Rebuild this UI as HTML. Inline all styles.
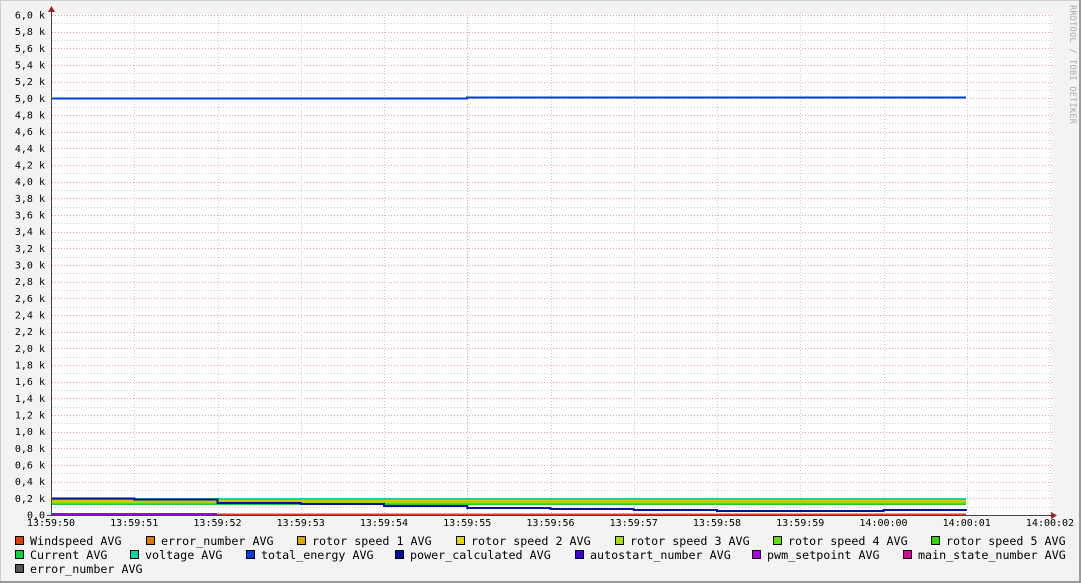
<!DOCTYPE html>
<html><head><meta charset="utf-8"><style>
html,body{margin:0;padding:0;background:#f3f3f3;}
svg{display:block;}
text{font-family:"DejaVu Sans Mono","Liberation Mono",monospace;}
</style></head><body>
<svg width="1081" height="583" xmlns="http://www.w3.org/2000/svg">
<rect x="0" y="0" width="1081" height="583" fill="#f3f3f3"/>
<rect x="0.5" y="0.5" width="1079" height="581" fill="none" stroke="#cfcfcf"/>
<line x1="1080" y1="0" x2="1080" y2="583" stroke="#9a9a9a" stroke-width="2"/>
<line x1="0" y1="582" x2="1081" y2="582" stroke="#9a9a9a" stroke-width="2"/>
<rect x="51" y="14" width="1001" height="501" fill="#ffffff"/>
<g id="grid"></g>
<g id="data"></g>
<g id="labels" font-size="10" fill="#000"></g>
<line x1="51.5" y1="9" x2="51.5" y2="516" stroke="#444"/>
<polygon points="48,12 51.5,6 55,12" fill="#a02020"/>
<line x1="47" y1="515.5" x2="1052" y2="515.5" stroke="#444"/>
<polygon points="1051,512 1057,515.5 1051,519" fill="#a02020"/>
<text x="1070" y="5" font-size="8.5" fill="#aaa" transform="rotate(90 1070 5)" letter-spacing="0.3">RRDTOOL / TOBI OETIKER</text>
<g id="legend" font-size="11.7" fill="#000"></g>
</svg>
<script>
var ns="http://www.w3.org/2000/svg";
function el(p,t,a,txt){var e=document.createElementNS(ns,t);for(var k in a)e.setAttribute(k,a[k]);if(txt!=null)e.textContent=txt;document.getElementById(p).appendChild(e);return e;}
// horizontal grid
for(var i=1;i<=60;i++){var y=515-i*500/60;y=Math.round(y)+0.5;
 var major=i%2==0;
 el("grid","line",{x1:52,x2:1052,y1:y,y2:y,stroke:major?"#e8a0a0":"#cccccc","stroke-dasharray":"1,2"});}
var xs=[];for(var j=0;j<=12;j++)xs.push(51+j*83.25);
for(var j=1;j<13;j++){var x=Math.round(xs[j])+0.5;el("grid","line",{x1:x,x2:x,y1:14,y2:515,stroke:j==5?"#e8a0a0":"#cccccc","stroke-dasharray":"1,2"});}
// y labels
for(var i=0;i<=30;i++){var v=(i*0.2).toFixed(1).replace(".",",");var y=515-i*500/30;
 el("labels","text",{x:45,y:y+3.5,"text-anchor":"end"},i==0?"0,0":v+" k");}
var tl=["13:59:50","13:59:51","13:59:52","13:59:53","13:59:54","13:59:55","13:59:56","13:59:57","13:59:58","13:59:59","14:00:00","14:00:01","14:00:02"];
for(var j=0;j<13;j++)el("labels","text",{x:xs[j],y:526,"text-anchor":"middle"},tl[j]);
// data
var X=function(j){return xs[j];};
function band(y,h,c,x0,x1){el("data","rect",{x:x0,y:y,width:x1-x0,height:h,fill:c});}
band(498,2,"#20d0a0",51,966);
band(500,1.5,"#e0c000",51,966);
band(501.5,2,"#90e000",51,966);
band(503.5,1.5,"#20cc30",51,966);
// total energy
el("data","path",{d:"M51 98.5H467V97.5H966",stroke:"#0040d0","stroke-width":2,fill:"none"});
// power calculated steps
var ys=[498.5,499.5,503,504,506,508,509,510,511,511,510];
var d="M51 "+ys[0];for(var k=0;k<11;k++){d+="V"+ys[k]+"H"+X(k+1);}
el("data","path",{d:d,stroke:"#0010a0","stroke-width":2,fill:"none"});
el("data","path",{d:"M51 514H217",stroke:"#a000e0","stroke-width":2,fill:"none"});
el("data","path",{d:"M217 514.5H966",stroke:"#e04010","stroke-width":2,fill:"none"});
// legend
var L=[[15,541,"#e03a00","Windspeed AVG"],[146,541,"#e07800","error_number AVG"],[297,541,"#e0a800","rotor speed 1 AVG"],[456,541,"#e0d800","rotor speed 2 AVG"],[615,541,"#a8e000","rotor speed 3 AVG"],[773,541,"#60e000","rotor speed 4 AVG"],[931,541,"#30d800","rotor speed 5 AVG"],
[15,555,"#00d840","Current AVG"],[130,555,"#00d8a8","voltage AVG"],[246,555,"#0040e0","total_energy AVG"],[395,555,"#0010a0","power_calculated AVG"],[575,555,"#4000e0","autostart_number AVG"],[752,555,"#b000e0","pwm_setpoint AVG"],[903,555,"#e000a0","main_state_number AVG"],
[15,569,"#555555","error_number AVG"]];
L.forEach(function(a){el("legend","rect",{x:a[0]+0.5,y:a[1]-4.5,width:8,height:8,fill:a[2],stroke:"#000"});
 el("legend","text",{x:a[0]+15,y:a[1]+4},a[3]);});
</script>
</body></html>
